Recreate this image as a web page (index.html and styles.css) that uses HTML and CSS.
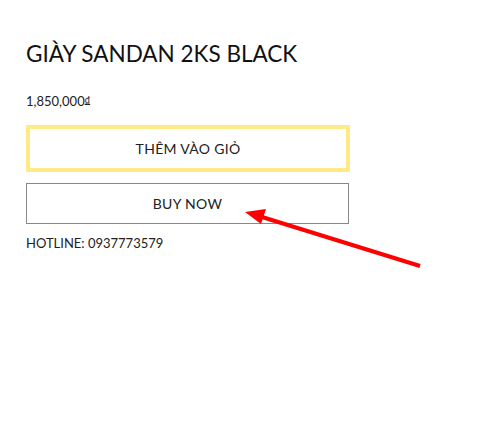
FILE: index.html
```html
<!DOCTYPE html>
<html lang="en">
<head>
    <meta charset="UTF-8">
    <meta name="viewport" content="width=device-width, initial-scale=1.0">
    <title>Giày Sandan 2KS Black</title>
    <link rel="stylesheet" href="styles.css">
</head>
<body>

<div class="product">
    <h1 class="product-title">GIÀY SANDAN 2KS BLACK</h1>
    <p class="price">1,850,000<span class="currency">₫</span></p>

    <button class="btn btn-cart">THÊM VÀO GIỎ</button>
    <button class="btn btn-buy">BUY NOW</button>

    <p class="hotline">HOTLINE: 0937773579</p>
</div>

<svg class="arrow" width="498" height="428" viewBox="0 0 498 428">
    <line x1="420" y1="266" x2="262" y2="217" stroke="#ff0000" stroke-width="4" stroke-linecap="butt"/>
    <polygon points="245,212 266,209 261,224" fill="#ff0000"/>
</svg>

</body>
</html>
```

FILE: styles.css
```css
body {
    font-family: Lato, "Open Sans", sans-serif;
    margin: 0;
    padding: 0;
    background-color: #fff;
    color: #222;
}
.product {
    padding: 38px 0 0 26px;
    width: 324px;
}
.product-title {
    font-size: 22.5px;
    font-weight: normal;
    line-height: 32px;
    margin: 0 0 22px 0;
    color: #111;
}
.price {
    font-size: 13px;
    line-height: 16px;
    margin: 0 0 16px 0;
}
.currency {
    font-size: 9px;
    text-decoration: underline;
    vertical-align: 3px;
}
.btn {
    display: block;
    width: 100%;
    background: #fff;
    font-family: inherit;
    font-size: 14px;
    letter-spacing: 0.3px;
    color: #222;
    cursor: pointer;
    padding: 0;
}
.btn-cart {
    height: 47px;
    border: 4px solid #ffea85;
    margin-bottom: 11px;
}
.btn-buy {
    width: 323px;
    height: 41px;
    border: 1px solid #888;
}
.hotline {
    font-size: 13px;
    line-height: 16px;
    margin: 11px 0 0 0;
}
.arrow {
    position: absolute;
    left: 0;
    top: 0;
    pointer-events: none;
}
```
